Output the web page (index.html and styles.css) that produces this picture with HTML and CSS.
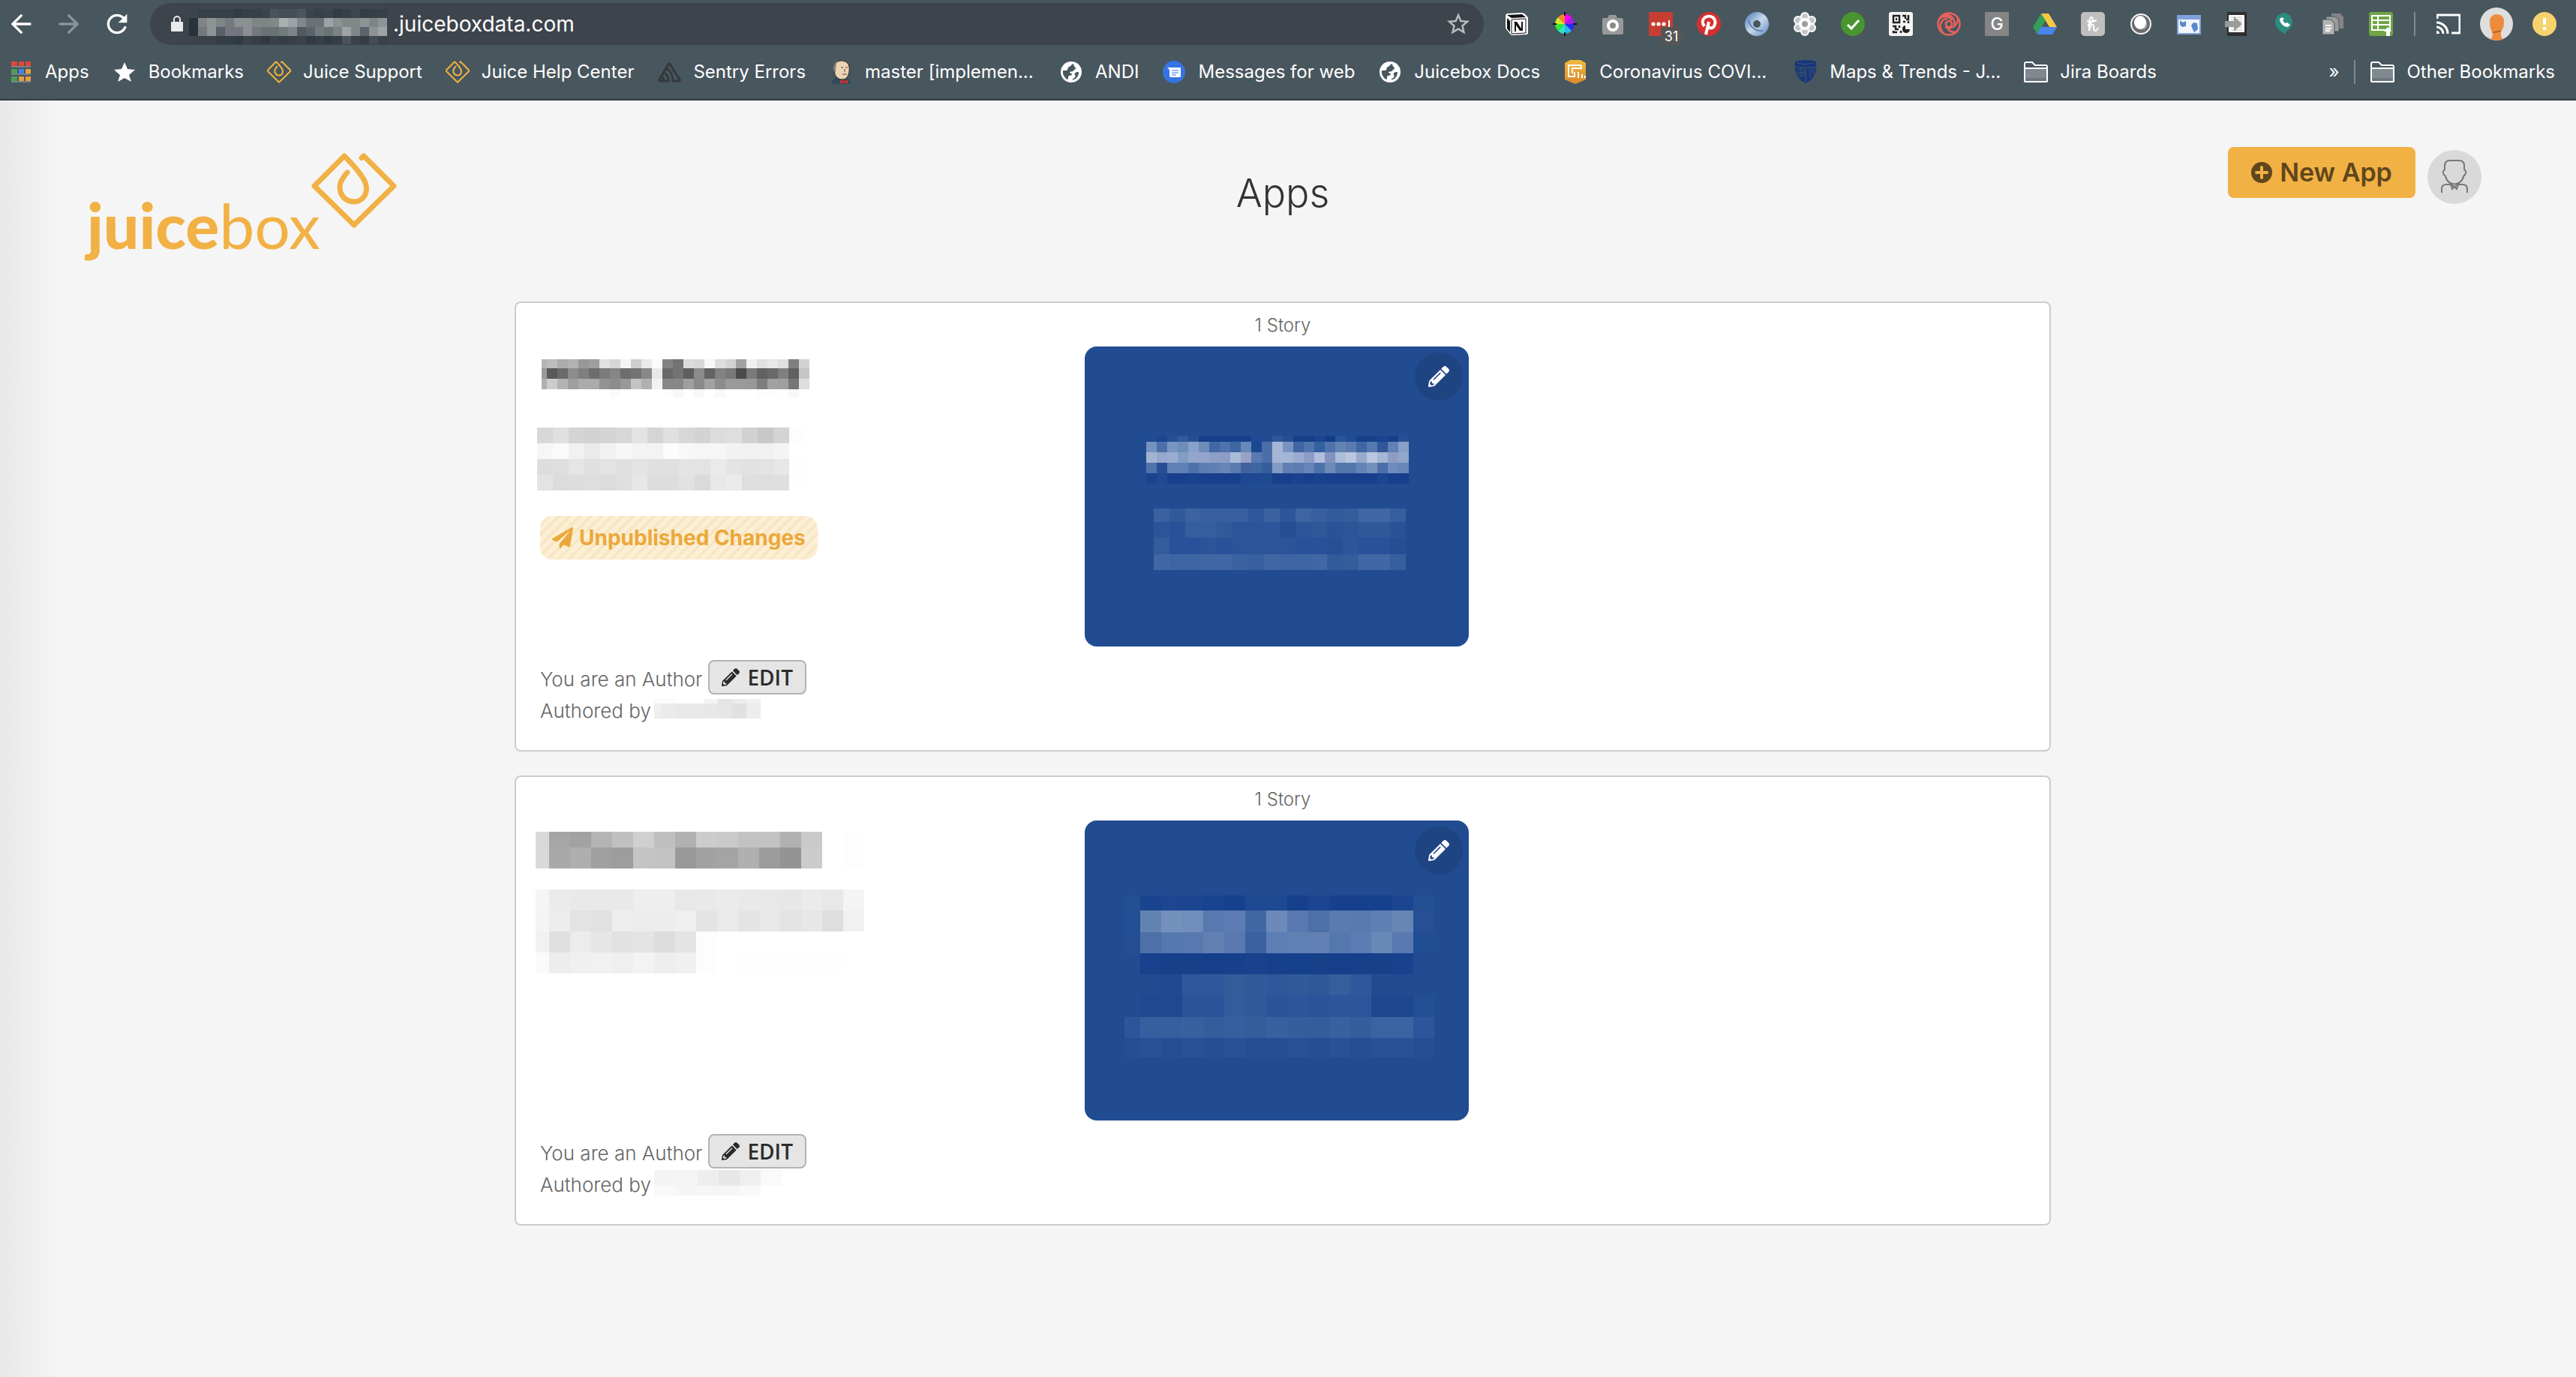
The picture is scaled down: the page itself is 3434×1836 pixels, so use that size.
FILE: index.html
```html
<!DOCTYPE html>
<html lang="en">
<head>
<meta charset="utf-8">
<meta name="viewport" content="width=device-width, initial-scale=1">
<title>Apps - Juicebox</title>
<link rel="stylesheet" href="styles.css">
</head>
<body>
<svg class="defs" aria-hidden="true">
  <defs>
    <linearGradient id="ring" x1="0" y1="0" x2="1" y2="1"><stop offset="0" stop-color="#6f97c6"/><stop offset=".5" stop-color="#c9d9ea"/><stop offset="1" stop-color="#7fa3cf"/></linearGradient>
    <linearGradient id="gold" x1="0" y1="0" x2="0" y2="1"><stop offset="0" stop-color="#f0bb3f"/><stop offset="1" stop-color="#d9892b"/></linearGradient>
  </defs>
  <symbol id="pencil" viewBox="0 0 512 512"><path d="M497.9 142.1l-46.1 46.1c-4.7 4.7-12.3 4.7-17 0l-111-111c-4.7-4.7-4.7-12.3 0-17l46.1-46.1c18.7-18.7 49.1-18.7 67.9 0l60.1 60.1c18.8 18.7 18.8 49.1 0 67.9zM284.2 99.8L21.6 362.4.4 483.9c-2.9 16.4 11.4 30.6 27.8 27.8l121.5-21.3 262.6-262.6c4.7-4.7 4.7-12.3 0-17l-111-111c-4.8-4.7-12.4-4.7-17.1 0zM124.1 339.9c-5.5-5.5-5.5-14.3 0-19.8l154-154c5.5-5.5 14.3-5.5 19.8 0s5.5 14.3 0 19.8l-154 154c-5.5 5.5-14.3 5.5-19.8 0zM88 424h48v36.3l-64.5 11.3-31.1-31.1L51.7 376H88v48z"/></symbol>
  <symbol id="drop" viewBox="0 0 114 100"><path d="M67 6.500 L70 4 L110 44 L57 96 L4 44 L44 4 C54 14 62 23 68 32 C80 50 70 65 57 65 C40 65 33 46 42 34 Q45 29 48 26" fill="none" stroke="currentColor" stroke-width="7" stroke-linecap="round" stroke-linejoin="round"/></symbol>
  <symbol id="globe" viewBox="0 0 28 28"><circle cx="14" cy="14" r="14" fill="#fff"/><path d="M17 3c-4 1-3 4-6 4-2 1-1 4-3 5H3c-1 6 3 10 6 12 2-1 0-4 2-5l4-1c1-2-3-2-3-4l4-1c2 0 1-3 4-3 1-2-3-3-3-7zM24 14c-4 0-6 1-5 4 1 1 1 3-1 4l-3 2c5 1 9-4 9-10z" fill="#48565e"/></symbol>
  <symbol id="folder" viewBox="0 0 32 28"><path d="M2 26V2h10l3 4h15v20z" fill="#48565e"/><path d="M2 10h28v16H2z" fill="#80898f"/><path d="M2 22h28v4H2z" fill="#6c757a"/><path d="M1 26V3q0-2 2-2h8l4 4h14q2 0 2 2v19q0 1-2 1H3q-2 0-2-1zM1 9h30" fill="none" stroke="#fff" stroke-width="2"/></symbol>
</svg>

<div class="browser">
  <div class="toolbar">
    <button class="nav" type="button" aria-label="Back"><svg viewBox="0 0 24 24"><path d="M20 11H7.830l5.590-5.590L12 4l-8 8 8 8 1.410-1.410L7.830 13H20z"/></svg></button>
    <button class="nav nav-off" type="button" aria-label="Forward"><svg viewBox="0 0 24 24"><path d="M4 11h12.170l-5.590-5.590L12 4l8 8-8 8-1.410-1.410L16.170 13H4z"/></svg></button>
    <button class="nav" type="button" aria-label="Reload"><svg viewBox="0 0 24 24"><path d="M17.650 6.350C16.200 4.900 14.210 4 12 4c-4.420 0-7.990 3.580-7.990 8s3.570 8 7.990 8c3.730 0 6.840-2.550 7.730-6h-2.080c-.82 2.330-3.040 4-5.650 4-3.310 0-6-2.690-6-6s2.690-6 6-6c1.660 0 3.140.69 4.220 1.780L13 11h7V4z"/></svg></button>
    <div class="address">
      <svg class="lock" viewBox="0 0 16 22"><path d="M1 8h14q1 0 1 1v11q0 1-1 1H1q-1 0-1-1V9q0-1 1-1z" fill="#e8eaed"/><path d="M4 9V5a4 4 0 0 1 8 0v4" fill="none" stroke="#e8eaed" stroke-width="2"/></svg>
      <svg class="mosaic mosaic-url" data-mosaic="url"></svg>
      <input class="url" type="text" value=".juiceboxdata.com" aria-label="Address">
      <button class="bookmark-star" type="button" aria-label="Bookmark this page"><svg viewBox="0 0 24 24"><path d="M22 9.240l-7.190-.62L12 2 9.190 8.630 2 9.240l5.460 4.730L5.820 21 12 17.270 18.180 21l-1.630-7.030zM12 15.400l-3.760 2.270 1-4.280-3.320-2.880 4.380-.38L12 6.100l1.710 4.040 4.380.38-3.320 2.880 1 4.280z"/></svg></button>
    </div>
    <div class="extensions">
      <svg viewBox="0 0 32 32"><path d="M1 5q0-2 2-3l19-1q2 0 4 1l4 4q1 1 1 3v19q0 2-2 2l-19 1q-2 0-3-2l-5-6q-1-1-1-3z" fill="#fff"/><path d="M3 4l20-1 5 4-19 1zM3 8l4 4v15l-4-5z" fill="#111"/><path d="M9 10l19-1v19l-19 1z" fill="#fff" stroke="#111" stroke-width="1"/><path d="M14 14v12M23 13v12" stroke="#111" stroke-width="2"/><path d="M12 13h4l8 12h-4z" fill="#111"/></svg>
      <svg viewBox="0 0 32 32"><path d="M16 16V3a13 13 0 0 1 9 4z" fill="#f0f"/><path d="M16 16l9-9a13 13 0 0 1 4 9z" fill="#a01ee8"/><path d="M16 16h13a13 13 0 0 1-4 9z" fill="#2a2af5"/><path d="M16 16l9 9a13 13 0 0 1-9 4z" fill="#2bb4f0"/><path d="M16 16v13a13 13 0 0 1-9-4z" fill="#2ee6c0"/><path d="M16 16l-9 9a13 13 0 0 1-4-9z" fill="#35e835"/><path d="M16 16H3a13 13 0 0 1 4-9z" fill="#d6e82e"/><path d="M16 16L7 7a13 13 0 0 1 9-4z" fill="#f5872a"/><path d="M16 0v5M16 27v5M0 16h5M27 16h5" stroke="#111" stroke-width="2"/></svg>
      <svg viewBox="0 0 32 32"><path d="M3 8h6l2-4h9l2 4h5q3 0 3 3v17q0 2-3 2H4q-2 0-2-2V10q0-2 1-2z" fill="#999"/><circle cx="16" cy="18" r="6" fill="#8a8a8a" stroke="#fff" stroke-width="4"/></svg>
      <span class="ext-badged"><svg viewBox="0 0 32 32"><rect width="32" height="32" rx="3" fill="#c63d32"/><circle cx="6" cy="16" r="2.600" fill="#fff"/><circle cx="13" cy="16" r="2.600" fill="#fff"/><circle cx="20" cy="16" r="2.600" fill="#fff"/><path d="M27 11v10" stroke="#fff" stroke-width="2"/></svg><span class="badge">31</span></span>
      <svg viewBox="0 0 32 32"><circle cx="16" cy="16" r="16" fill="#d3302f"/><path d="M10 19c-7-10 4-16 11-12 7 5 2 17-4 14l-2-2M16 13l-4 17" fill="none" stroke="#fff" stroke-width="4"/></svg>
      <svg viewBox="0 0 32 32"><circle cx="16" cy="16" r="10.500" fill="none" stroke="url(#ring)" stroke-width="11"/><path d="M5 11c2 9 9 15 19 14" fill="none" stroke="#5c84b6" stroke-width="2"/></svg>
      <svg viewBox="0 0 32 32"><g fill="#c4c7c9" stroke="#fff" stroke-width="2"><circle cx="16" cy="6" r="5"/><circle cx="16" cy="26" r="5"/><circle cx="7" cy="11" r="5"/><circle cx="25" cy="11" r="5"/><circle cx="7" cy="21" r="5"/><circle cx="25" cy="21" r="5"/></g><circle cx="16" cy="16" r="8" fill="#fff"/><circle cx="16" cy="16" r="4" fill="#9a9fa2"/></svg>
      <svg viewBox="0 0 32 32"><circle cx="16" cy="16" r="16" fill="#48952f"/><path d="M9 17l5 5 10-11" fill="none" stroke="#fff" stroke-width="3"/></svg>
      <svg viewBox="0 0 32 32"><rect width="32" height="32" rx="3" fill="#f4f4f4"/><path d="M6 5h8v9H6zM18 5h4v4M26 4v6h-3M19 13h3M26 12v3M5 19h4v4h4M6 25v2h5M14 18v3M16 25v3" fill="none" stroke="#222" stroke-width="2.500"/><path d="M9 8h2v3H9z" fill="#222"/><path d="M22 18v5h6a5 5 0 1 1-6-5z" fill="#222"/></svg>
      <svg viewBox="0 0 32 32"><g fill="none" stroke="#e8625c" stroke-width="2.500"><circle cx="16" cy="16" r="14.500"/><path d="M9 4c9-2 16 5 14 14M28 9c-1 10-9 15-17 11M26 27c-8 1-15-5-14-14M8 27C1 19 6 9 14 9M3 10c5-6 13-5 17 1"/><circle cx="16" cy="16" r="4"/></g></svg>
      <svg viewBox="0 0 32 32"><rect width="32" height="32" rx="1" fill="#858585"/><text x="16" y="24" class="glyph-g">G</text></svg>
      <svg viewBox="0 0 32 32"><path d="M11 2l6 9-11 19L0 20z" fill="#34a055"/><path d="M11 2h10l11 18H22z" fill="#f6c944"/><path d="M10 20h22l-6 10H6z" fill="#4a84ed"/></svg>
      <svg viewBox="0 0 32 32"><rect width="32" height="32" rx="5" fill="#bfbfbf"/><path d="M9 18c6-3 9-10 5-11-3 0-3 9-3 18 1-6 3-9 5-8 3 1-1 8 3 8 2 0 3-2 4-4M8 12c3 1 9 1 13-1" fill="none" stroke="#fff" stroke-width="2"/></svg>
      <svg viewBox="0 0 32 32"><circle cx="16" cy="16" r="13" fill="#6c6c6c" stroke="#f2f2f2" stroke-width="2"/><ellipse cx="15" cy="14" rx="8" ry="9" fill="#fff"/><path d="M23 12c1 6-3 11-8 11 7 2 11-5 8-11z" fill="#bbb"/></svg>
      <svg viewBox="0 0 32 32"><path d="M0 4h32v26H0z" fill="#7ea3dd"/><path d="M2 10h28v18H2z" fill="#f1f5fc"/><path d="M4 11l4 3 4-2v7l-5 1-3-3zM19 18l3-4 5 1 1 8-5 4-2-4z" fill="#5b87cc"/></svg>
      <svg viewBox="0 0 32 32"><path d="M3 0h26v32H3z" fill="#2e2e2e"/><path d="M5 4h21v23H5z" fill="#fff"/><path d="M8 7h15M8 10h15M8 13h15M8 20h15M8 24h15" stroke="#bbb"/><path d="M0 12h12V6l11 10-11 10v-6H0z" fill="#9b9b9b"/></svg>
      <svg viewBox="0 0 32 32"><path d="M16 1a13 13 0 0 1 1 25v4c-6-4-14-8-14-16A13 13 0 0 1 16 1z" fill="#2b8d7e"/><path d="M12 7l-3 2c0 6 5 11 11 11l3-3-4-3-3 1-3-4 2-2z" fill="#fff"/></svg>
      <svg viewBox="0 0 32 32"><path d="M14 2h12l4 5v15H14z" fill="#858585"/><path d="M7 6h12l5 5v15H7z" fill="#9b9b9b" stroke="#48565e"/><path d="M2 10h11l5 5v15H2z" fill="#b3b3b3" stroke="#48565e"/><path d="M6 18h8M6 22h8M6 25h6" stroke="#fff" stroke-width="2"/></svg>
      <svg viewBox="0 0 32 32"><rect width="32" height="32" rx="3" fill="#6fa545"/><path d="M4 5h24v19H4zM4 11h24M4 17h24M12 5v19" fill="none" stroke="#fff" stroke-width="2"/><path d="M23 32v-6h-3l5-6 5 6h-2v6z" fill="#fff"/></svg>
    </div>
    <span class="rule"></span>
    <div class="session">
      <svg class="icon" viewBox="0 0 32 32"><path d="M1 9V4h30v24H20" fill="none" stroke="#fff" stroke-width="3"/><path d="M0 14a15 15 0 0 1 15 15M0 20a9 9 0 0 1 9 9" fill="none" stroke="#fff" stroke-width="3"/><path d="M0 25a4 4 0 0 1 4 4H0z" fill="#fff"/></svg>
      <svg class="portrait" viewBox="0 0 44 44"><circle cx="22" cy="22" r="22" fill="#dedede"/><path d="M13 20c-1-14 18-14 19-3 0 8-1 12-4 15v7l3 3q-9 4-17 0l3-4-1-6c-2-3-3-7-3-12z" fill="#ee8c3d"/><path d="M17 33c4 0 8-1 11-2" fill="none" stroke="#b86525" stroke-width="2"/></svg>
      <svg class="icon" viewBox="0 0 32 32"><circle cx="16" cy="16" r="16" fill="#f7d36d"/><path d="M16 8v9M16 20v4" stroke="#fff" stroke-width="4"/></svg>
    </div>
  </div>

  <nav class="bookmarks" aria-label="Bookmarks">
    <a href="#"><svg class="icon" viewBox="0 0 32 32"><path d="M3 2h8v6H3z M13 2h7v6h-7zM22 2h7v6h-7z" fill="#e0463a"/><path d="M3 12h8v6H3zM3 22h8v6H3z" fill="#4d9e58"/><path d="M13 12h7v6h-7z" fill="#4284f0"/><path d="M22 12h7v6h-7zM13 22h7v6h-7zM22 22h7v6h-7z" fill="#e8a13a"/><path d="M3 9h26M3 19h26M3 29h26" stroke="#a5abae" stroke-width="1"/></svg><span>Apps</span></a>
    <a href="#"><svg class="icon" viewBox="0 0 32 32"><path d="M16 3l4 9 10 1-8 7 3 9-9-5-9 5 3-9-8-7 10-1z" fill="#fff"/></svg><span>Bookmarks</span></a>
    <a href="#"><svg class="icon juice" viewBox="0 0 32 32"><use href="#drop" x="-1" y="0" width="34" height="32"/></svg><span>Juice Support</span></a>
    <a href="#"><svg class="icon juice" viewBox="0 0 32 32"><use href="#drop" x="-1" y="0" width="34" height="32"/></svg><span>Juice Help Center</span></a>
    <a href="#"><svg class="icon" viewBox="0 0 32 32"><path d="M16 4L3 26q-1 2 2 2h4M12 11c6 3 9 10 9 17h7q3 0 2-2L16 4M9 17c4 2 6 6 6 11H9c0-3-1-5-4-6" fill="none" stroke="#34383b" stroke-width="3"/></svg><span>Sentry Errors</span></a>
    <a href="#"><svg class="icon" viewBox="0 0 32 32"><path d="M4 32c0-6 4-9 8-9h9c5 1 8 3 8 9z" fill="#2f4c5e"/><path d="M7 8C9-1 25-2 27 9c1 9-2 17-9 17C9 26 6 18 7 8z" fill="#ecd3b4" stroke="#2b2523"/><path d="M6 9c2-5 3-7 6-8-3 5-3 10-3 16-3-2-4-5-3-8z" fill="#8a8078"/><path d="M16 10h3M22 10h3M18 19h6M21 12v4" stroke="#5b4335"/><path d="M15 26l5 2 5-2v6l-5-2-5 2z" fill="#c72f2f"/></svg><span class="clipped">master [implemen...</span></a>
    <a href="#"><svg class="icon" viewBox="-2 -2 32 32"><use href="#globe" width="28" height="28"/></svg><span>ANDI</span></a>
    <a href="#"><svg class="icon" viewBox="0 0 32 32"><circle cx="16" cy="16" r="15" fill="#3574e2"/><path d="M7 10h18v12q0 1-2 1H12q-2 0-2-2v-8z" fill="#fff"/><path d="M13 14h9M13 17h9M13 20h6" stroke="#3574e2" stroke-width="1"/></svg><span>Messages for web</span></a>
    <a href="#"><svg class="icon" viewBox="-2 -2 32 32"><use href="#globe" width="28" height="28"/></svg><span>Juicebox Docs</span></a>
    <a href="#"><svg class="icon" viewBox="0 0 32 32"><path d="M9 0h14l7 4v22l-9 4-5 2-5-2-9-4V4z" fill="url(#gold)"/><path d="M24 7H7v15h8v-6M24 7v4H12v7M20 24v-8M25 24v-5M29 24v-3" fill="none" stroke="#fff" stroke-width="2"/></svg><span class="clipped">Coronavirus COVI...</span></a>
    <a href="#"><svg class="icon" viewBox="0 0 32 32"><path d="M2 2q14-4 28 0c1 12-1 23-14 29C3 25 1 14 2 2z" fill="#17377d"/><path d="M2 10h28M16 10v20M5 4l10 2 11-2M22 11v13M26 11v9" fill="none" stroke="#48565e"/><circle cx="10" cy="17" r="5" fill="none" stroke="#48565e"/><path d="M5 17h10M10 12v10" stroke="#48565e"/></svg><span class="clipped">Maps &amp; Trends - J...</span></a>
    <a href="#"><svg class="icon" viewBox="0 -2 32 32"><use href="#folder" width="32" height="28"/></svg><span>Jira Boards</span></a>
    <div class="overflow">
      <button type="button" class="more" aria-label="More bookmarks">»</button>
      <span class="rule rule-dim"></span>
      <a href="#"><svg class="icon" viewBox="0 -2 32 32"><use href="#folder" width="32" height="28"/></svg><span>Other Bookmarks</span></a>
    </div>
  </nav>
</div>

<div class="page">
  <header class="page-head">
    <a class="logo" href="#" aria-label="juicebox"><span class="wordmark"><b>juice</b>box</span><svg class="logo-mark"><use href="#drop"/></svg></a>
    <h1>Apps</h1>
    <div class="actions">
      <button class="new-app" type="button"><svg viewBox="0 0 28 28"><circle cx="14" cy="14" r="14" fill="#60461b"/><path d="M14 7v14M7 14h14" stroke="#f2b145" stroke-width="4" stroke-linecap="round"/></svg>New App</button>
      <button class="profile" type="button" aria-label="Profile"><svg viewBox="0 0 72 72"><g fill="none" stroke="#777" stroke-width="2"><path d="M23 26v-5q0-7 7-7h12q7 0 7 7v5q4 3 1 7l-2 2c-3 14-21 14-24 0l-2-2q-3-4 1-7z"/><path d="M19 57v-5q0-6 6-6h6v-3M53 57v-5q0-6-6-6h-6v-3M31 46l2 6 3-3 3 3 2-6-5 3z"/></g></svg></button>
    </div>
  </header>

  <main class="apps">
    <article class="card">
      <div class="summary">
        <svg class="mosaic title-a" data-mosaic="title-a"></svg>
        <svg class="mosaic desc-a" data-mosaic="desc-a"></svg>
        <span class="status"><svg viewBox="0 0 512 512"><path d="M476 3.200L12.500 270.600c-18.100 10.400-15.800 35.600 2.200 43.200L121 358.400l287.300-253.200c5.500-4.900 13.300 2.600 8.600 8.300L176 407v80.500c0 23.600 28.500 32.900 42.500 15.800L282 426l124.600 52.200c14.200 6 30.400-2.900 33-18.200l72-432C515 7.800 493.300-6.800 476 3.200z"/></svg>Unpublished Changes</span>
        <div class="authoring">
          <div class="line"><span>You are an Author</span><button class="edit" type="button"><svg><use href="#pencil"/></svg>EDIT</button></div>
          <div class="line author"><span>Authored by</span><svg class="mosaic" data-mosaic="author-a"></svg></div>
        </div>
      </div>
      <div class="stories">
        <p class="count">1 Story</p>
        <div class="tile">
          <button class="tile-edit" type="button" aria-label="Edit story"><svg><use href="#pencil"/></svg></button>
          <svg class="mosaic tile-title-a" data-mosaic="tile-title-a"></svg>
          <svg class="mosaic tile-desc-a" data-mosaic="tile-desc-a"></svg>
        </div>
      </div>
    </article>

    <article class="card">
      <div class="summary">
        <svg class="mosaic title-b" data-mosaic="title-b"></svg>
        <svg class="mosaic desc-b" data-mosaic="desc-b"></svg>
        <div class="authoring">
          <div class="line"><span>You are an Author</span><button class="edit" type="button"><svg><use href="#pencil"/></svg>EDIT</button></div>
          <div class="line author"><span>Authored by</span><svg class="mosaic" data-mosaic="author-b"></svg></div>
        </div>
      </div>
      <div class="stories">
        <p class="count">1 Story</p>
        <div class="tile">
          <button class="tile-edit" type="button" aria-label="Edit story"><svg><use href="#pencil"/></svg></button>
          <svg class="mosaic tile-b" data-mosaic="tile-b"></svg>
        </div>
      </div>
    </article>
  </main>
</div>
<script src="mosaic.js"></script>
</body>
</html>
```
FILE: styles.css
```css
* { box-sizing: border-box; }

body {
  margin: 0;
  min-height: 100vh;
  display: flex;
  flex-direction: column;
  background: #f5f5f5;
  color: #333;
  font-family: Inter, "Liberation Sans", sans-serif;
  font-size: 24px;
  line-height: 32px;
}

button {
  margin: 0;
  padding: 0;
  border: 0;
  background: none;
  color: inherit;
  font: inherit;
  cursor: pointer;
}

a { color: inherit; text-decoration: none; }
svg { display: block; flex: none; }
.defs { position: absolute; width: 0; height: 0; }

/* Browser bars */
.browser {
  background: #48565e;
  border-bottom: 2px solid #333c42;
  color: #fff;
}

.toolbar {
  display: flex;
  align-items: center;
  height: 64px;
  padding: 0 26px 0 8px;
}

.nav { margin-right: 24px; }
.nav svg { width: 40px; height: 40px; fill: #fff; }
.nav-off svg { fill: #8b9499; }

.address {
  display: flex;
  align-items: center;
  flex: 1;
  min-width: 0;
  height: 56px;
  margin-right: 28px;
  padding: 0 16px 0 28px;
  border-radius: 28px;
  background: #3d444b;
}

.lock { width: 16px; height: 22px; margin-right: 8px; }
.mosaic-url { margin-top: 4px; }

.url {
  flex: 1;
  min-width: 0;
  padding: 0 8px;
  border: 0;
  outline: 0;
  background: none;
  color: #fff;
  font: inherit;
  font-size: 28px;
}

.bookmark-star svg { width: 36px; height: 36px; fill: #bcbec0; }

.extensions { display: flex; gap: 32px; }
.extensions svg, .icon { width: 32px; height: 32px; }
.glyph-g { fill: #fff; font-size: 23px; font-weight: 500; text-anchor: middle; }

.ext-badged { position: relative; }

.badge {
  position: absolute;
  left: 16px;
  top: 20px;
  width: 28px;
  height: 24px;
  border-radius: 3px;
  background: #555;
  font-size: 18px;
  line-height: 26px;
  text-align: center;
}

.rule { width: 2px; height: 32px; margin: 0 28px; background: #7f898e; }
.session { display: flex; align-items: center; gap: 26px; }
.portrait { width: 44px; height: 44px; }

.bookmarks {
  display: flex;
  align-items: center;
  gap: 31px;
  height: 68px;
  padding: 0 28px 4px 12px;
  white-space: nowrap;
}

.bookmarks a { display: flex; align-items: center; gap: 16px; }
.clipped { width: 228px; }
.juice { color: #edb040; }
.overflow { display: flex; align-items: center; margin-left: auto; }
.rule-dim { margin: 0 20px; }

/* Page */
.page {
  flex: 1;
  padding: 62px 126px 96px 112px;
  background: linear-gradient(to right, #e8e8e8, #f5f5f5 76px);
}

.page-head {
  display: grid;
  grid-template-columns: 1fr auto 1fr;
  align-items: start;
  height: 206px;
}

.logo { display: flex; padding: 8px 0 0 4px; color: #f2b145; }
.wordmark { padding-top: 48px; font: 400 84px/96px Lato, sans-serif; }
.wordmark b { font-weight: 900; }
.logo-mark { width: 114px; height: 100px; margin-left: -12px; }

h1 {
  margin: 0;
  padding-top: 30px;
  font-size: 52px;
  font-weight: 300;
  line-height: 64px;
}

.actions { display: flex; justify-content: flex-end; gap: 16px; }

.new-app {
  display: flex;
  align-items: center;
  justify-content: center;
  gap: 10px;
  width: 250px;
  height: 68px;
  border-radius: 8px;
  background: #f2b145;
  color: #60461b;
  font-size: 34px;
  font-weight: 600;
}

.new-app svg { width: 28px; height: 28px; }
.profile { margin-top: 4px; border-radius: 50%; background: #d9d9d9; }
.profile svg { width: 72px; height: 72px; }

.apps {
  display: grid;
  gap: 32px;
  max-width: 2048px;
  margin: 0 auto;
}

.card {
  display: grid;
  grid-template-columns: 1fr 528px 1fr;
  min-height: 600px;
  border: 2px solid #ccc;
  border-radius: 8px;
  background: #fff;
}

.summary {
  display: flex;
  flex-direction: column;
  align-items: flex-start;
  padding: 73px 0 30px 26px;
}

.title-a { margin: 2px 0 0 8px; }
.desc-a { margin: 40px 0 34px 2px; }
.desc-b { margin-top: 28px; }

.status {
  display: flex;
  align-items: center;
  gap: 8px;
  height: 58px;
  margin-left: 6px;
  padding: 0 16px;
  border-radius: 16px;
  background: repeating-linear-gradient(135deg, #fdefd3 0 6px, #f7e6c6 6px 10px);
  color: #eba83a;
  font-size: 28px;
  font-weight: 700;
}

.status svg { width: 28px; height: 28px; fill: currentColor; }

.authoring { margin: auto 0 0 6px; color: #666; font-size: 26px; font-weight: 300; }
.line { display: flex; align-items: baseline; gap: 8px; height: 46px; }
.author { align-items: center; gap: 4px; height: 44px; }
.author .mosaic { margin-bottom: 6px; }

.edit {
  display: flex;
  align-items: center;
  gap: 10px;
  height: 46px;
  padding: 0 16px;
  border: 2px solid #b3b3b3;
  border-radius: 8px;
  background: #e5e5e5;
  color: #2b2b2b;
  font: 600 28px/42px "Open Sans", sans-serif;
}

.edit svg { width: 24px; height: 24px; fill: currentColor; }

.count {
  margin: 14px 0 12px;
  color: #666;
  font-weight: 300;
  text-align: center;
}

.tile {
  display: flex;
  flex-direction: column;
  width: 512px;
  height: 400px;
  padding: 8px;
  border-radius: 16px;
  background: #214c92;
}

.tile-edit {
  display: grid;
  place-items: center;
  align-self: flex-end;
  width: 64px;
  height: 64px;
  border-radius: 50%;
  background: #1f4482;
}

.tile-edit svg { width: 28px; height: 28px; fill: #fff; }
.tile-title-a { margin: 47px 0 0 74px; }
.tile-desc-a { margin: 33px 0 0 84px; }
.tile-b { margin: 28px 0 0 45px; }
```
FILE: mosaic.js
```js
// Redaction mosaics. Each has its first column's width, the width of the
// others, the row heights, and one line of cell colours per row
// ("." is empty, two digits are a grey).
const mosaics = {
  'url': {
    first: 12, col: 12, heights: [2, 12, 12, 12, 11],
    rows: [
      '. 394850 394850 394850 394850 394850 394850 394850 394850 394850 394850 394850 394850 394850 394850 394850 394850 394850 394850 394850 394850 394850',
      '3b454b 374046 374046 374046 374046 323c42 374046 374046 3a444a 4c545b 474f56 474f56 4d555c 3b444b 374046 3a444a 323c42 374046 3d464c 333d43 374046 374046',
      '27323b 7f8487 8e9395 7f8487 73797c 8b9092 8b9092 7f8487 7f8487 82878a a9aeb1 9da3a6 82878a 6b7275 6b7275 9ea3a5 8b9092 82878a 82878a 8e9395 7f8487 8e9395',
      '27323b 737a7c 8e9395 585f68 73767f 73767f 8b8f93 73797c 6b7275 6b7275 737a7c 7f8487 505861 5b626b 737a7c 6b7275 7b8184 9ea3a5 82878a 5b626b 8e9395 9ea3a5',
      '3d444b 394249 394249 343e45 343e45 303a41 3a434a 353f45 303a41 394249 343e45 353f45 3a434a 303a41 353f45 303a41 343e45 4a525a 394249 343e45 444c54 394249'
    ]
  },
  'title-a': {
    first: 7, col: 14, heights: [12, 14, 14, 11],
    rows: [
      'b4 bd ac b2 98 9f e1 d7 f4 cf ea fb 82 73 dc d8 f8 dd d3 a2 f0 e0 e8 e0 80 d3',
      '98 59 6b 8c 7f 6d 7b 86 6d 73 88 e8 68 73 5f 8b 63 82 79 4b 7a 62 69 80 60 c6',
      'b0 cc b4 9f ab ab 92 8c 99 c3 b1 f2 87 87 9f 8a a2 8c 9a 9a 98 7e a2 9f 76 de',
      '. . . . . . . fa . . . . fd f7 . f7 . f9 . . . fd fd . f8 .'
    ]
  },
  'desc-a': {
    first: 21, col: 21, heights: [21, 21, 21, 21],
    rows: [
      'd8 e0 d4 d2 d4 d7 e3 d5 e0 d7 d3 dc de d1 c8 d4 fd',
      'f6 fa f1 ea f2 f7 f3 f3 fc f8 f6 f6 f2 f1 f1 f4 .',
      'dd de e5 e0 e3 e0 e4 e0 e0 e4 e3 ea e4 e2 e3 e7 fe',
      'e3 dc dd de dc df e7 dd dd e2 da e8 eb de de df fe'
    ]
  },
  'author-a': {
    first: 9, col: 19, heights: [6, 20],
    rows: ['fb fb . . f4 e5 ec f0', 'ef eb e9 e9 e8 e6 e1 ed']
  },
  'title-b': {
    first: 18, col: 28, heights: [21, 28],
    rows: [
      'd9 a6 a2 b4 c0 d0 bf b1 cc ca c2 c2 b1 ca . fd',
      'd9 a9 ae a0 9d c4 c3 99 a2 a4 b0 9c 94 cc . fd'
    ]
  },
  'desc-b': {
    first: 18, col: 28, heights: [28, 28, 28, 28],
    rows: [
      'f5 eb e9 e9 e9 ee ee e8 e9 eb e9 e8 e7 eb e8 f4',
      'f4 ed e3 e1 ee ec ed ef e4 ea e4 e8 e3 e7 de f1',
      'f1 e0 ec e6 e2 e4 dd e4 fd . . . . . . .',
      'fa ed f0 f1 ef f3 ee f0 fd . fe fe fe fe fe .'
    ]
  },
  'author-b': {
    first: 30, col: 28, heights: [21, 13],
    rows: ['f4 f5 ee e7 ef fa', 'f9 f6 f6 f6 f9 .']
  },
  'tile-title-a': {
    first: 14, col: 14, heights: [8, 14, 14, 14, 14],
    rows: [
      '204c94 1c4590 264f95 315c9b 254f95 16408b 17408c 17408b 17408b 16408b 204b94 204b94 2f589a 254f95 17408b 17408b 1b4590 133c88 27539a 204c93 17408b 17408b 1b4590 15408a 264f95',
      '7591bf 4d6fa9 7b95c2 6e8dbb 88a2c9 6e8dbb 4168a4 5072ad 3e66a3 6888b8 1d4791 4a6fa8 a5b7d5 7893c0 4065a4 5073ae 3560a0 5073ae 6483b3 5a7baf 4066a3 5579b0 2f5799 6180b5 87a1c8',
      'a1b4d4 97a8cd 99add0 839ec4 92a7cb 93a5cb 8b9fc7 8f9cc5 a9bdd8 97a2c6 5a7ab0 4b70a9 a5b5d5 a3b6d6 9bacd0 8e9dc6 b1bfdd 8293c0 abbdd9 bac6de 98abcc bbc7df a5b7d6 8e9cc5 93a7cb',
      '5073ab 284f96 6080b3 6080b3 4d71a9 5b7eb1 6080b3 6786b7 5b7bb0 4261a0 4066a2 345e9c 839cc3 6080b3 5d7db1 6684b7 4d72aa 6c8bb9 5377ad 5377ad 6384b5 7391bd 4a6ea7 6f8cbf 6687b7',
      '1a4390 204b93 183f8c 183f8c 194290 183f8c 183f8c 183f8c 183f8c 1e4991 1d4892 1f4a92 183f8c 183f8c 1a4390 183f8c 194290 183f8c 183f8c 183f8c 183f8c 183f8c 1c4690 183f8c 183f8c'
    ]
  },
  'tile-desc-a': {
    first: 21, col: 21, heights: [18, 21, 22, 21],
    rows: [
      '3a62a0 315a9b 3b63a1 3860a0 3860a0 3860a0 2f579b 3a62a0 2d559a 3d65a3 3860a0 315b9a 335d9b 4168a5 4168a5 345e9d',
      '2b5499 28519a 345e9d 345e9d 315a9a 2b5499 2b5499 2d559b 244f95 2b5499 2f589a 2a5397 2b5499 2f589a 2f589a 2a5397',
      '335c9c 28519a 28519a 2b5499 28519a 2b5499 2b5499 2b5499 2b5499 28519a 28519a 264f96 2d559a 28519a 28519a 244f95',
      '4168a5 3d65a3 3d65a3 4168a5 4168a5 3a62a0 3860a0 4168a5 3d65a3 3d65a3 4168a5 315b9a 335d9b 4168a5 4168a5 365f9e'
    ]
  },
  'tile-b': {
    first: 21, col: 28, heights: [20, 29, 28, 28, 28, 29, 28, 26],
    rows: [
      '234f93 1a4490 1c4690 1b4590 17448f 15408c 1d4892 1d4892 17408c 1b4590 17408c 17408c 15408b 1b4590 234f93',
      '234f96 6284b3 7490bd 708dbb 5878af 5c7cb3 4268a3 6c89b9 5878af 4d70a8 597bb0 5779ae 5f7fb2 6786b6 264f96',
      '244f95 4d70a9 5578ae 5779b0 6380b3 5878af 3a62a1 5d7eb5 6080b3 6280b3 5477ad 5c7cb3 6888b8 5878af 214d93',
      '214c92 18418d 17408b 17408b 163f8b 17408b 19428e 17408b 15408b 17408b 163f8b 17408b 17408b 19428e 214c92',
      '214c92 214c92 1f4a92 2f589c 2f589c 325d9b 305a9a 2f589c 305a9a 2f5898 345f9c 2f589c 214c92 214c92 214c92',
      '214c92 1e4890 1e4890 2a549a 2a549a 325c9b 305a9a 2a549a 2c559b 2a549a 2c559b 2c559b 1e478f 1e478f 234f94',
      '2c569c 365f9f 365f9f 38619f 335d9b 365f9f 345d9c 38619f 335d9b 335d9b 38619f 335d9b 3a63a1 3a63a1 2c569c',
      '244f95 275297 244f95 275297 244f95 275297 244f95 244f95 275297 244f95 275297 244f95 275297 275297 244f95'
    ]
  }
};

const SVG = 'http://www.w3.org/2000/svg';

document.querySelectorAll('[data-mosaic]').forEach((svg) => {
  const { first, col, heights, rows } = mosaics[svg.dataset.mosaic];
  let y = 0;
  let width = 0;
  rows.forEach((row, r) => {
    let x = 0;
    row.split(' ').forEach((cell, c) => {
      const w = c === 0 ? first : col;
      if (cell !== '.') {
        const rect = document.createElementNS(SVG, 'rect');
        rect.setAttribute('x', x);
        rect.setAttribute('y', y);
        rect.setAttribute('width', w);
        rect.setAttribute('height', heights[r]);
        rect.setAttribute('fill', '#' + (cell.length === 2 ? cell.repeat(3) : cell));
        svg.appendChild(rect);
      }
      x += w;
    });
    width = Math.max(width, x);
    y += heights[r];
  });
  svg.setAttribute('width', width);
  svg.setAttribute('height', y);
  svg.setAttribute('shape-rendering', 'crispEdges');
});
```
